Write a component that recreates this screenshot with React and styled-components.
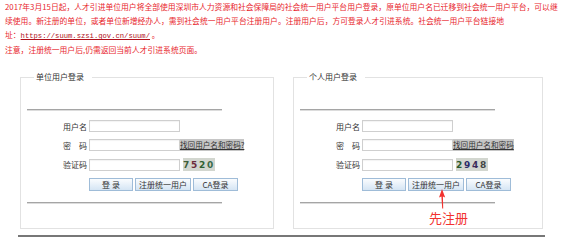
import React from 'react';
import styled, { createGlobalStyle } from 'styled-components';

const GlobalStyle = createGlobalStyle`
  html, body {
    margin: 0;
    padding: 0;
    background: #fff;
  }
  body {
    font-family: "Noto Sans CJK SC", "Noto Sans", sans-serif;
  }
`;

const Page = styled.div`
  position: relative;
  width: 561px;
  height: 245px;
  overflow: hidden;
`;

const Notice = styled.div`
  padding-left: 5px;
  color: #e8262d;
  font-size: 7.8px;
  line-height: 14px;
  white-space: nowrap;
`;

const Line = styled.div``;

const Link = styled.a`
  color: #b0101a;
  font-family: "Liberation Mono", monospace;
  font-size: 7.2px;
  text-decoration: underline;
`;

const Panels = styled.div`
  display: flex;
  gap: 19px;
  margin: 15px 0 0 20px;
`;

const Panel = styled.fieldset`
  box-sizing: border-box;
  width: ${(p) => p.$width}px;
  min-width: 0;
  margin: 0;
  padding: 0 0 24px;
  border: 1px solid #e2e2e2;
`;

const Legend = styled.legend`
  margin-left: 13px;
  padding: 0 8px 0 2px;
  font-size: 8px;
  line-height: 10px;
  color: #333;
`;

const Rule = styled.div`
  width: 195px;
  height: 0;
  margin: ${(p) => p.$top}px 0 0 6px;
  border-top: 1px solid #a5a5a5;
  border-bottom: 1px solid #dcdcdc;
`;

const Form = styled.div`
  display: flex;
  flex-direction: column;
  gap: 7px;
  margin: 9px 0 0 42px;
`;

const Row = styled.div`
  display: flex;
  align-items: center;
  height: ${(p) => p.$h || 12}px;
`;

const Label = styled.span`
  width: 24px;
  margin-right: 2px;
  text-align: right;
  font-size: 8px;
  color: #333;
  white-space: nowrap;
`;

const Input = styled.input`
  box-sizing: border-box;
  width: 91px;
  height: 12px;
  margin: 0;
  padding: 0 2px;
  border: 1px solid #cfcfcf;
  box-shadow: inset 0 1px 1px rgba(0, 0, 0, 0.05);
  font-size: 8px;
`;

const Forgot = styled.a`
  background: #c6c6c6;
  color: #333;
  font-size: 7.6px;
  line-height: 12px;
  text-decoration: underline;
  white-space: nowrap;
`;

const Captcha = styled.span`
  display: flex;
  align-items: center;
  justify-content: center;
  width: 32px;
  height: 13px;
  margin-left: 3px;
  background: #d2d6cf;
  font-family: "DejaVu Sans", sans-serif;
  font-weight: bold;
  font-size: 9px;
  letter-spacing: 1.8px;
`;

const Digit = styled.span`
  color: ${(p) => p.$c};
`;

const Buttons = styled.div`
  display: flex;
  gap: 2px;
  height: 13px;
  margin-left: 26px;
`;

const Button = styled.button`
  box-sizing: border-box;
  width: ${(p) => p.$w}px;
  height: 13px;
  padding: 0;
  border: 1px solid #9fbcd8;
  background: linear-gradient(#fafcfe, #d5e5f4);
  font-family: inherit;
  font-size: 8px;
  line-height: 11px;
  color: #333;
`;

const BottomLine = styled.div`
  width: 527px;
  height: 2px;
  margin: 6px 0 0 18px;
  background: #777;
`;

const Arrow = styled.svg`
  position: absolute;
  left: 437px;
  top: 189px;
`;

const Note = styled.span`
  position: absolute;
  left: 429px;
  top: 210px;
  font-size: 13px;
  line-height: 16px;
  color: #f2322f;
`;

const LoginPanel = ({ title, width, code, forgot }) => (
  <Panel $width={width}>
    <Legend>{title}</Legend>
    <Rule $top={27} />
    <Form>
      <Row>
        <Label>用户名</Label>
        <Input type="text" />
      </Row>
      <Row>
        <Label>密　码</Label>
        <Input type="password" />
        <Forgot>{forgot}</Forgot>
      </Row>
      <Row $h={13}>
        <Label>验证码</Label>
        <Input type="text" />
        <Captcha>
          {code.map(([d, c], i) => (
            <Digit key={i} $c={c}>{d}</Digit>
          ))}
        </Captcha>
      </Row>
      <Buttons>
        <Button $w={44}>登 录</Button>
        <Button $w={56}>注册统一用户</Button>
        <Button $w={45}>CA登录</Button>
      </Buttons>
    </Form>
    <Rule $top={11} />
  </Panel>
);

export default function App() {
  return (
    <Page>
      <GlobalStyle />
      <Notice>
        <Line>2017年3月15日起，人才引进单位用户将全部使用深圳市人力资源和社会保障局的社会统一用户平台用户登录，原单位用户名已迁移到社会统一用户平台，可以继</Line>
        <Line>续使用。新注册的单位，或者单位新增经办人，需到社会统一用户平台注册用户。注册用户后，方可登录人才引进系统。社会统一用户平台链接地</Line>
        <Line>
          址：<Link href="#">https://suum.szsi.gov.cn/suum/</Link> 。
        </Line>
        <Line>注意，注册统一用户后,仍需返回当前人才引进系统页面。</Line>
      </Notice>
      <Panels>
        <LoginPanel
          title="单位用户登录"
          width={254}
          forgot="找回用户名和密码?"
          code={[['7', '#3d5e3a'], ['5', '#6b2a3c'], ['2', '#2f5f30'], ['0', '#3a6a4a']]}
        />
        <LoginPanel
          title="个人用户登录"
          width={250}
          forgot="找回用户名和密码"
          code={[['2', '#2d5a2d'], ['9', '#2a2a6a'], ['4', '#3a2a5a'], ['8', '#444']]}
        />
      </Panels>
      <BottomLine />
      <Arrow width="10" height="20" viewBox="0 0 10 20">
        <polygon points="5,0 8.2,8.5 5.9,7.4 6.2,19.5 5.2,19.5 4.4,7.4 2,8.5" fill="#f2322f" />
      </Arrow>
      <Note>先注册</Note>
    </Page>
  );
}
